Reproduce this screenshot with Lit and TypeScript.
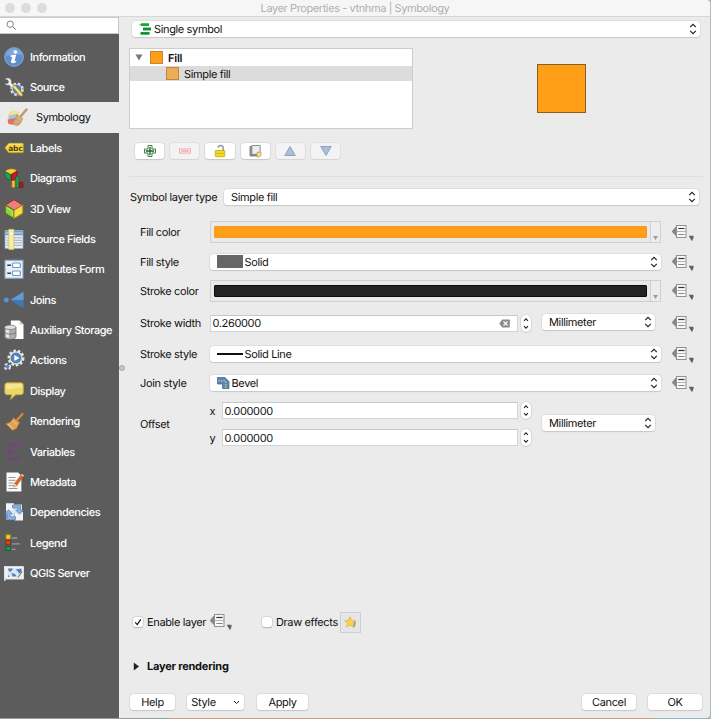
import { LitElement, html, svg, css, nothing } from "lit";
import { customElement, property } from "lit/decorators.js";
import { classMap } from "lit/directives/class-map.js";

const gear = (cx: number, cy: number, r: number, fill: string) => svg`
  <circle cx=${cx} cy=${cy} r=${r} fill="none" stroke=${fill} stroke-width="2.4" stroke-dasharray="2.6 1.9"/>
  <circle cx=${cx} cy=${cy} r=${r - 0.6} fill=${fill}/>`;

const icons: Record<string, unknown> = {
  information: svg`
    <circle cx="10" cy="10" r="9.3" fill="#5b8fd0" stroke="#8db4e4" stroke-width=".9"/>
    <path d="M2 8a8.2 8.2 0 0 1 16 0c-5-2-11 2-16 0z" fill="#7ea9df"/>
    <circle cx="11.4" cy="5" r="1.8" fill="#fff"/>
    <path d="M6.800 8.200l5.400-.5-1.700 6.500 1.800-.4-.4 1.500c-2.300 1.500-5.500 1.300-4.900-1l1.200-4.300-1.700-.1z" fill="#fff"/>`,
  source: svg`
    ${gear(13, 12.3, 5.7, "#deded8")}
    <circle cx="13" cy="12.3" r="4.2" fill="#4d80bb"/>
    <path d="M1 2.2c1.5-1.6 4.2-1.7 5.6.1 1 1.3 1 2.5.6 3.7l4 3.8-2.2 2.3-4-4C3.400 8.500 1.600 7.800.700 6.400l3 .2 1-1.500-.8-2z" fill="#eee" stroke="#777" stroke-width=".4"/>
    <path d="M8.500 10l2.400-2 7.500 8.600.6 3-3-.7z" fill="#efd567" stroke="#6e6121" stroke-width=".6"/>
    <path d="M10 9.200l7.700 9" stroke="#fff0a6" stroke-width=".8"/>`,
  symbology: svg`
    <path d="M2 5.500l4-2.300 7 2-3 6-9-2z" fill="#f4e18a"/>
    <path d="M1.500 8.500l9-1.500 1 5-10 2z" fill="#a3c4e8"/>
    <path d="M.5 12.500l8-1.500 6 3-3 4.500-10-1.500z" fill="#ea6a68"/>
    <path d="M19.500 2.500l-5.300 6.300" stroke="#c09a68" stroke-width="2.500" stroke-linecap="round"/>
    <path d="M9.800 7.600l6 4-2.800 5.400-4 1.800-3.700-3.700c2-.8 3.700-3.500 4.500-7.500z" fill="#d3b183" stroke="#aa8454" stroke-width=".6"/>
    <path d="M7 14l4 3M8.600 11.500l4.300 3" stroke="#a9814e" stroke-width=".6"/>`,
  labels: svg`
    <path d="M.8 10l4-4.700h13.700a.8.8 0 0 1 .8.800v7.800a.8.8 0 0 1-.8.800H4.800z" fill="#f3d63d" stroke="#b99a13" stroke-width=".7"/>
    <path d="M2.300 9.500l3-3.400h13.200" fill="none" stroke="#fff09a" stroke-width=".7"/>
    <text x="4.200" y="12.500" class="abc">abc</text>`,
  diagrams: svg`
    <path d="M7 6.500L1.400 3.600C3 .2 10.500-.3 13 3z" fill="#f5cf29" stroke="#86731c" stroke-width=".5"/>
    <path d="M6.900 6.800v5.800C2 11 .2 7.500 1.300 4z" fill="#23a05a" stroke="#0b5e2d" stroke-width=".6"/>
    <path d="M7.400 6.600l5.600-3.400c1.300 3-.2 7.500-5.600 9.200z" fill="#c21e23" stroke="#750b0e" stroke-width=".6"/>
    <path d="M7.800 12.500h3.400v7H7.800z" fill="#f3c22a" stroke="#80651a" stroke-width=".6"/>
    <path d="M12 8.400h2.800v11.100H12z" fill="#2d9e58" stroke="#155e2c" stroke-width=".6"/>
    <path d="M15.700 14.400h3.200v5h-3.200z" fill="#b9181c" stroke="#690a0d" stroke-width=".6"/>`,
  view3d: svg`
    <path d="M10 .7l8.800 5.400L10 11.300 1.300 6z" fill="#ef7f7c" stroke="#9e2420"/>
    <path d="M1.300 6L10 11.300v8.300L1.300 14.200z" fill="#8ed33c" stroke="#477e18"/>
    <path d="M18.800 6L10 11.300v8.300l8.800-5.400z" fill="#f6dd44" stroke="#a68513"/>
    <path d="M3.200 9l5.200 3.200v4.600" fill="none" stroke="#c4f18b" stroke-width=".8"/>`,
  fields: svg`
    <path d="M1 1.500h18v18H1z" fill="#e9eef4" stroke="#86a9ce" stroke-width=".8"/>
    <path d="M1.300 2h17.400v4.300H1.300z" fill="#6e9cca"/>
    <path d="M2 4h16" stroke="#c7dcf1"/>
    <path d="M2.500 8.800h15.500M2.500 11.300h15.500M2.500 13.800h15.500M2.500 16.300h15.500" stroke="#96a7b9" stroke-width=".9"/>
    <path d="M4.800.4h5v20h-5z" fill="#f7edaa" stroke="#d8c85f" stroke-width=".8"/>
    <circle cx="7.300" cy="4.700" r="1.200" fill="#fff"/>`,
  form: svg`
    <path d="M1 1.300h18v18H1z" fill="#e9eff5" stroke="#80a8d2" stroke-width="1.100"/>
    <rect x="8.500" y="4" width="7.800" height="4.500" rx="1" fill="#fff" stroke="#6d9aca" stroke-width="1.200"/>
    <rect x="8.500" y="12" width="7.800" height="4.500" rx="1" fill="#fff" stroke="#6d9aca" stroke-width="1.200"/>
    <path d="M3.300 6.300h3.600M3.300 14.200h3.600" stroke="#253f60" stroke-width="1.400"/>`,
  joins: svg`
    <circle cx="2.300" cy="10" r="2.500" fill="#5c91cf"/>
    <path d="M6.500 10l13-8.300v16.600z" fill="#3f78b7"/><path d="M6.500 10l13-8.300V10z" fill="#6399d1"/>`,
  storage: svg`
    <path d="M6.800.6h8.700l4 4V19H6.800z" fill="#fff"/><path d="M15.500.6v4h4z" fill="#ccc"/>
    <path d="M.5 7.500v9.200c0 3.500 11.500 3.500 11.500 0V7.500z" fill="#adadad" stroke="#656565" stroke-width=".7"/>
    <path d="M2 9v8c1 .8 2 1 3 1V9.800z" fill="#e5e5e5"/>
    <ellipse cx="6.250" cy="7.300" rx="5.750" ry="2.200" fill="#dedede" stroke="#707070" stroke-width=".7"/>
    <path d="M.5 11.800c0 3 11.500 3 11.500 0" fill="none" stroke="#676767" stroke-width=".8"/>`,
  actions: svg`
    ${gear(12, 8, 7.3, "#e5e5e2")}
    <circle cx="12" cy="8" r="5" fill="#5286c4" stroke="#345b88" stroke-width=".6"/>
    <path d="M10.300 4.900l5.100 3.100-5.100 3.100z" fill="#fff"/>
    ${gear(3.4, 16.7, 2.5, "#e3e3e0")}
    <circle cx="3.400" cy="16.700" r="1.900" fill="#4f89cb"/>`,
  display: svg`
    <path d="M3.300 1.700h13.500a2.500 2.500 0 0 1 2.500 2.500v7a2.500 2.500 0 0 1-2.500 2.500h-5L6.500 18.600l1.300-4.900H3.300a2.500 2.500 0 0 1-2.500-2.500v-7a2.500 2.500 0 0 1 2.500-2.500z" fill="#ecd768" stroke="#c1aa3d" stroke-width=".8"/>
    <path d="M2 8V4.500q0-1.400 1.400-1.400h13.200q1.500 0 1.500 1.400V7c-5-1-10 2-16.100 1z" fill="#f4e68c"/>`,
  rendering: svg`
    <path d="M18.500 3L13 9" stroke="#dc8a32" stroke-width="2.200" stroke-linecap="round"/>
    <path d="M9.500 6.800l6.200 4.700-3.300 6.200-4.300 1.500-6.400-6.400c3.600-.5 6-2.600 7.800-6z" fill="#dda35c" stroke="#b46c22" stroke-width=".7"/>
    <path d="M8.200 9.500l5.400 4.200M3.800 12.800l6.300 5.800" stroke="#fbcf91" stroke-width=".8"/>`,
  variables: svg`
    <path d="M14.800 5.600C13.500 1.300 6 1.200 5.600 5.300c-.3 2.900 2.600 4.300 5.800 4.200-4.600-.2-8 1.700-7.600 4.700.6 4.700 9.500 4.800 11.300-.6" fill="none" stroke="#74437c" stroke-width="1.800"/>
    <circle cx="14" cy="4.700" r="1.500" fill="#7b4783"/>`,
  metadata: svg`
    <path d="M2.500.6h11.700l3.200 3.200v15.800H2.500z" fill="#fafafa"/>
    <path d="M4.500 5.500h7M4.500 8.300h7M4.500 11h5M4.500 13.700h9M4.500 16.500h9" stroke="#999" stroke-width="1"/>
    <path d="M17.300 2.600l2.300 1.500-6.700 9.200-3 1.900.5-3.500z" fill="#df6a27" stroke="#a44310" stroke-width=".5"/>
    <path d="M10.400 11.700l2.500 1.600-3 1.900z" fill="#efd8b5"/><path d="M17.300 2.600l2.300 1.500" stroke="#eee" stroke-width="1.200"/>`,
  dependencies: svg`
    <path d="M2 1.300h8v8H2zM10.700 10h8.300v8.500h-8.300z" fill="#f1f3f6"/><path d="M9 2.500h9v9H9zM2.500 9h8v9h-8z" fill="#dfe5ec"/>
    <path d="M8.500 3h8v5.200h2.800l-3.800 4-3.800-4h2.300V6H8.500z" fill="#8db4e6" stroke="#4c7cba" stroke-width=".7"/>
    <path d="M11.500 17.600H3.400v-5.600H.8l3.800-4.200 3.800 4.200H6v2.800h5.500z" fill="#8db4e6" stroke="#4c7cba" stroke-width=".7"/>`,
  legend: svg`
    <rect x="2" y="1.800" width="4.400" height="4.200" fill="#f4ce22" stroke="#a7830d" stroke-width=".7"/>
    <rect x="2" y="7.600" width="4.400" height="4.200" fill="#d8421c" stroke="#861f0d" stroke-width=".7"/>
    <rect x="2" y="13.400" width="4.400" height="4.200" fill="#1f9a4c" stroke="#0a5927" stroke-width=".7"/>
    <path d="M7.800 5h5.500M7.800 10.800h8M7.800 16.400h3.700" stroke="#999" stroke-width="1.300"/>`,
  server: svg`
    <path d="M1 3.500h18.500v12.500H1z" fill="#f0f3f6" stroke="#ddd"/>
    <path d="M3.500 5.500h14v8.500h-14z" fill="#dbe6f0"/>
    <path d="M4 5.500h5l-1.500 2.500-1.500 1L4.500 7.500zM11.500 6.500l6-1v3.500l-2.500 1.500-1.500-2.500zM7.500 10l3.500 1 1.500 2.500H8.500zM4 11.500l1.500 2.500H4z" fill="#4c82ba"/>
    <path d="M.8 3v15" stroke="#f5f5f5" stroke-width="1.200"/><path d="M14 14.500l4-6" stroke="#555" stroke-width=".9"/>`,
};

const pages: [string, string][] = [
  ["information", "Information"], ["source", "Source"], ["symbology", "Symbology"],
  ["labels", "Labels"], ["diagrams", "Diagrams"], ["view3d", "3D View"],
  ["fields", "Source Fields"], ["form", "Attributes Form"], ["joins", "Joins"],
  ["storage", "Auxiliary Storage"], ["actions", "Actions"], ["display", "Display"],
  ["rendering", "Rendering"], ["variables", "Variables"], ["metadata", "Metadata"],
  ["dependencies", "Dependencies"], ["legend", "Legend"], ["server", "QGIS Server"],
];

const chevrons = html`<svg class="chev" width="8" height="12" viewBox="0 0 8 12">
  <path d="M1.200 4.200L4 1.400l2.800 2.800M1.200 7.800L4 10.600l2.800-2.800" fill="none" stroke="#222" stroke-width="1.150"/></svg>`;

@customElement("combo-box")
export class ComboBox extends LitElement {
  static styles = css`
    :host { display: block; height: 16px; }
    .box { box-sizing: border-box; height: 100%; display: flex; align-items: center; background: #fff;
      border-radius: 3.5px; box-shadow: 0 0 0 .5px #d2d2d2, 0 1px 1px #bfbfbf; padding: 0 3px 0 7px; }
    .text { flex: 1; white-space: nowrap; }
    .chev { display: block; }
  `;
  render() {
    return html`<div class="box"><slot name="icon"></slot><span class="text"><slot></slot></span>${chevrons}</div>`;
  }
}

@customElement("spin-box")
export class SpinBox extends LitElement {
  @property() value = "";
  @property({ type: Boolean }) clearable = false;
  static styles = css`
    :host { display: flex; align-items: center; gap: 3px; height: 17px; }
    .field { flex: 1; box-sizing: border-box; height: 17px; background: #fff; border: 1px solid #d3d3d3;
      border-top-color: #c8c8c8; display: flex; align-items: center; justify-content: space-between; padding: 0 7px 0 2px; }
    .step { box-sizing: border-box; width: 10px; height: 17px; border-radius: 5px; background: #fff;
      box-shadow: 0 0 0 .5px #ccc, 0 .5px 1px #aaa; display: block; }
  `;
  render() {
    return html`<div class="field"><span>${this.value}</span>${this.clearable
        ? html`<svg width="11" height="9" viewBox="0 0 11 9"><path d="M3.200.5H10q.8 0 .8.800v6.400q0 .8-.8.800H3.200L.3 4.500z" fill="#8a8a8a"/><path d="M4.500 2.500l4 4m0-4l-4 4" stroke="#fff" stroke-width="1.100"/></svg>`
        : nothing}</div>
      <svg class="step" viewBox="0 0 10 17"><path d="M3 5.800l2-2 2 2M3 11.200l2 2 2-2" fill="none" stroke="#222" stroke-width="1.100"/></svg>`;
  }
}

@customElement("color-button")
export class ColorButton extends LitElement {
  static styles = css`
    :host { display: flex; box-sizing: border-box; height: 22px; border: 1px solid #d0d0d0; background: #e9e9e9; }
    .well { flex: 1; padding: 4px 3px; }
    .bar { height: 12px; border-radius: 2px; background: var(--swatch); box-shadow: inset 0 0 0 1px var(--edge); }
    .menu { width: 9px; border-left: 1px solid #d0d0d0; display: flex; align-items: flex-end; justify-content: center; background: #ededed; }
    svg { display: block; margin-bottom: 2px; }
  `;
  render() {
    return html`<div class="well"><div class="bar"></div></div>
      <div class="menu"><svg width="5" height="4" viewBox="0 0 5 4"><path d="M0 0h5L2.500 4z" fill="#9a9a9a"/></svg></div>`;
  }
}

@customElement("override-button")
export class OverrideButton extends LitElement {
  static styles = css`:host, svg { display: block; width: 22px; height: 18px; }`;
  render() {
    return html`<svg viewBox="0 0 22 18">
      <path d="M4.500 2.500v9.600L.2 7.500z" fill="#888" stroke="#555" stroke-width=".6"/>
      <rect x="4.500" y="1.500" width="9.500" height="12" fill="#f8f8f8" stroke="#909090"/>
      <path d="M6.300 4.500h6.200" stroke="#333" stroke-width="1.200"/><path d="M6.300 10.500h6.200" stroke="#888" stroke-width="1"/>
      <path d="M5 7.500h9" stroke="#aaa" stroke-width=".9"/>
      <path d="M16.700 11.700h4.800v2l-1.500 3.500-1.700-2.700z" fill="#606060"/></svg>`;
  }
}

@customElement("app-root")
export class AppRoot extends LitElement {
  static styles = css`
    :host { display: block; width: 711px; height: 719px; overflow: hidden; background: #a9bcc0;
      font: 11px/14px Inter, "Liberation Sans", sans-serif; letter-spacing: -.36px; color: #111;
      text-rendering: geometricPrecision; }
    .window { box-sizing: border-box; width: 710px; height: 718px; display: flex; flex-direction: column;
      background: #ebebeb; border-radius: 0 4px 4px 0; overflow: hidden; }
    .desk { height: 1px; background: linear-gradient(90deg, #8fa39c 0 170px, #cf9d78 170px 653px, #93b4c2 653px); }
    .title { flex: none; height: 16px; background: #f6f6f6; border-bottom: 1px solid #d6d6d6; display: flex; align-items: center; }
    .lights { display: flex; gap: 6px; padding-left: 5px; width: 114px; box-sizing: border-box; }
    .light { width: 10px; height: 10px; border-radius: 50%; background: #dcdcdc; }
    .caption { flex: 1; text-align: center; color: #b0b0b0; padding-right: 119px; padding-left: 5px; letter-spacing: -.4px; }
    .body { flex: 1; display: flex; min-height: 0; }
    .sidebar { width: 119px; background: #5c5c5c; flex: none; }
    .search { box-sizing: border-box; height: 17px; background: #fff; border: 1px solid #c8c8c8; border-left: 0; padding: 2px 6px; }
    .search svg { display: block; }
    .pages { padding-top: 7.500px; }
    .page { height: 30.380px; display: flex; align-items: center; gap: 6px; padding-left: 4px; color: #fff;
      font-weight: 500; white-space: nowrap; letter-spacing: -.46px; }
    .page svg { flex: none; overflow: visible; }
    .page.current { background: #ebebeb; color: #111; gap: 9px; padding-left: 7px; font-weight: 400; letter-spacing: -.42px; }
    .abc { font: 700 7.500px "DejaVu Sans", sans-serif; fill: #4d431c; letter-spacing: -.2px; }
    .grip { width: 6px; flex: none; display: flex; align-items: center; justify-content: center; }
    .dot { width: 4px; height: 4px; border-radius: 50%; background: #c4c4c4; border: .5px solid #aaa; }
    .main { flex: 1; display: flex; flex-direction: column; padding: 4px 7px 8px 4px; min-width: 0; }
    .renderer { margin: 0 3px 0 3px; flex: none; }
    .ico { display: block; margin-right: 2px; flex: none; }
    .preview { display: flex; margin-top: 11px; height: 81px; flex: none; }
    .tree { box-sizing: border-box; width: 284px; border: 1px solid #cdcdcd; background: #fff; }
    .node { height: 16px; display: flex; align-items: center; padding-left: 5px; }
    .node.top { font-weight: 600; height: 17px; letter-spacing: -.2px; }
    .node.picked { background: #dcdcdc; padding-left: 36px; height: 15px; }
    .chip { box-sizing: border-box; width: 13px; height: 13px; background: #ff9e17; border: 1px solid #c88432; margin-right: 5px; }
    .top .chip { margin-left: 7px; }
    .picked .chip { background: #e8ae5c; }
    .swatch { box-sizing: border-box; width: 49px; height: 49px; background: #ff9e17; border: 1px solid #8c5d1d; margin: 16px 0 0 124px; }
    .tools { display: flex; gap: 6px; padding-left: 6px; margin-top: 14px; flex: none; }
    .tool, .btn { background: #fff; border-radius: 3.500px; box-shadow: 0 0 0 .5px #cfcfcf, 0 1px 1px #bebebe; height: 16px;
      display: flex; align-items: center; justify-content: center; }
    .tool { width: 29.200px; }
    .tool.off { background: #f3f3f3; box-shadow: 0 0 0 .5px #d6d6d6, 0 1px 1px #d2d2d2; }
    .rule { height: 1px; background: #dfdfdf; margin-top: 17px; flex: none; }
    .row { display: flex; align-items: center; flex: none; height: 22px; padding-left: 11px; }
    .name { width: 69.500px; flex: none; white-space: nowrap; }
    .wide { flex: none; width: 451px; }
    .unit { width: 113px; margin: -2px 0 0 11px; }
    .row override-button { margin: 2px 0 0 11px; }
    .row .far { margin-left: 17px; }
    .single { width: 321.500px; }
    .type { padding: 0 4px 0 1px; margin-top: 9px; }
    .type .name { width: 94px; }
    .type combo-box { flex: 1; }
    .fill-color { margin-top: 13px; }
    .fill-style, .stroke-color { margin-top: 7.500px; }
    .stroke-width { margin-top: 10px; }
    .stroke-style { margin-top: 9px; }
    .join-style { margin-top: 7px; }
    .orange { --swatch: #ff9e17; --edge: #f59a1c; }
    .dark { --swatch: #232323; --edge: #0a0a0a; }
    .patch { width: 26px; height: 13px; background: #666; margin-right: 2px; }
    .line { width: 26px; height: 1.500px; background: #111; margin-right: 2px; }
    .pair { width: 321.500px; display: flex; flex-direction: column; gap: 10px; }
    .axis { display: flex; align-items: center; }
    .axis span { width: 12px; }
    .axis spin-box { flex: 1; }
    .offset { height: 44px; margin-top: 8px; }
    .toggles { display: flex; align-items: center; margin-top: auto; padding-left: 4px; height: 22px; flex: none; white-space: nowrap; }
    .check { width: 10px; height: 10px; border-radius: 2.500px; background: #fff; box-shadow: 0 0 0 .5px #c4c4c4, 0 .5px 1px #aaa; margin-right: 4px; }
    .check svg { display: block; }
    .enable { width: 63px; }
    .draw { width: 62px; }
    .second { margin-left: 30px; }
    .fx { box-sizing: border-box; width: 21px; height: 21px; border: 1px solid #cfcfcf; background: #e6e6e6;
      display: flex; align-items: center; justify-content: center; margin-left: 2px; }
    .group { display: flex; align-items: center; gap: 7px; padding-left: 4px; font-weight: 700; height: 14px; margin-top: 26px; flex: none; letter-spacing: -.22px; }
    .buttons { display: flex; padding: 0 1px; margin-top: 21px; flex: none; }
    .help { width: 45px; } .style { width: 57px; margin: 0 13px 0 12px; gap: 17px; } .apply { width: 51px; }
    .cancel { width: 54px; margin-left: auto; margin-right: 12px; } .ok { width: 54px; }
  `;

  private tool(icon: unknown, off = false) {
    return html`<div class=${classMap({ tool: true, off })}><svg width="14" height="14" viewBox="0 0 14 14">${icon}</svg></div>`;
  }

  render() {
    return html`<div class="window">
      <div class="title">
        <div class="lights"><i class="light"></i><i class="light"></i><i class="light"></i></div>
        <div class="caption">Layer Properties - vtnhma | Symbology</div>
      </div>
      <div class="body">
        <nav class="sidebar">
          <div class="search"><svg width="11" height="11" viewBox="0 0 11 11"><circle cx="4.200" cy="4.200" r="3.200" fill="none" stroke="#777" stroke-width=".9"/><path d="M6.600 6.600l3.300 3.200" stroke="#777"/></svg></div>
          <div class="pages">${pages.map(([id, label]) => html`
            <div class=${classMap({ page: true, current: id === "symbology" })}>
              <svg width="20" height="20" viewBox="0 0 20 20">${icons[id]}</svg><span>${label}</span>
            </div>`)}</div>
        </nav>
        <div class="grip"><i class="dot"></i></div>
        <main class="main">
          <combo-box class="renderer"><svg slot="icon" class="ico" width="13" height="12" viewBox="0 0 13 12">
            <path d="M2 .3h8v2.800H2zM4 4.600h8v2.800H4zM1.500 8.900h9v2.800h-9z" fill="#13a538"/><path d="M2 1.700H.5M2 10.300h8.500M4 6h8" stroke="#0a7024" stroke-width=".7"/></svg>Single symbol</combo-box>
          <section class="preview">
            <div class="tree">
              <div class="node top"><svg width="8" height="7" viewBox="0 0 8 7"><path d="M.5.500h7L4 6.500z" fill="#777"/></svg><i class="chip"></i>Fill</div>
              <div class="node picked"><i class="chip"></i>Simple fill</div>
            </div>
            <div class="swatch"></div>
          </section>
          <div class="tools">
            ${this.tool(svg`<path d="M5 1.500h4V5h3.500v4H9v3.500H5V9H1.500V5H5z" fill="#f3faf3" stroke="#3f8049" stroke-width="1"/><path d="M7 3v8M3 7h8" stroke="#1c5f2b" stroke-width="1.300"/>`)}
            ${this.tool(svg`<path d="M1.500 4.800h11v4.400h-11z" fill="#fbe5e5" stroke="#eda5a5" stroke-width=".8"/><path d="M3.300 7h7.400" stroke="#e99" stroke-width="1.200"/>`, true)}
            ${this.tool(svg`<path d="M5 3.700c.5-3 5-3.200 5.200.3v3" fill="none" stroke="#999" stroke-width="1.500"/><rect x="2.300" y="6.500" width="9.400" height="6.200" rx=".6" fill="#f4d91f" stroke="#b99c0a" stroke-width=".7"/><path d="M3 9.500h8" stroke="#d9bc0c"/>`)}
            ${this.tool(svg`<path d="M2 2.500h8v9.500H2z" fill="#999" stroke="#666" stroke-width=".7"/><path d="M3.800 1.500h8.400v8.900H3.800z" fill="#ececec" stroke="#777" stroke-width=".8"/><path d="M9 8.300h4v3l-1.500 1.700H9z" fill="#f4dda0" stroke="#b79537" stroke-width=".7"/>`)}
            ${this.tool(svg`<path d="M7 2.500l5.300 9H1.700z" fill="#a9bfdd" stroke="#8296b5" stroke-width=".8"/>`, true)}
            ${this.tool(svg`<path d="M7 11.500l5.300-9H1.700z" fill="#a9bfdd" stroke="#8296b5" stroke-width=".8"/>`, true)}
          </div>
          <div class="rule"></div>
          <div class="row type"><span class="name">Symbol layer type</span><combo-box>Simple fill</combo-box></div>
          <div class="row fill-color"><span class="name">Fill color</span><color-button class="wide orange"></color-button><override-button></override-button></div>
          <div class="row fill-style"><span class="name">Fill style</span><combo-box class="wide"><div slot="icon" class="patch"></div>Solid</combo-box><override-button></override-button></div>
          <div class="row stroke-color"><span class="name">Stroke color</span><color-button class="wide dark"></color-button><override-button></override-button></div>
          <div class="row stroke-width"><span class="name">Stroke width</span><spin-box class="single" value="0.260000" clearable></spin-box><combo-box class="unit">Millimeter</combo-box><override-button class="far"></override-button></div>
          <div class="row stroke-style"><span class="name">Stroke style</span><combo-box class="wide"><div slot="icon" class="line"></div>Solid Line</combo-box><override-button></override-button></div>
          <div class="row join-style"><span class="name">Join style</span><combo-box class="wide"><svg slot="icon" class="ico" width="13" height="12" viewBox="0 0 13 12"><path d="M.5.500H8l4 4v7H5.500V7h-5z" fill="#5b87b8" stroke="#3b628f" stroke-width=".7"/><path d="M1.500 3.800H8l.8 1V11" fill="none" stroke="#e8d75e" stroke-dasharray="1.500 1"/></svg>Bevel</combo-box><override-button></override-button></div>
          <div class="row offset"><span class="name">Offset</span>
            <div class="pair"><div class="axis"><span>x</span><spin-box value="0.000000"></spin-box></div>
            <div class="axis"><span>y</span><spin-box value="0.000000"></spin-box></div></div>
            <combo-box class="unit">Millimeter</combo-box></div>
          <div class="toggles">
            <i class="check"><svg width="10" height="10" viewBox="0 0 10 10"><path d="M2.200 5.300l2 2.300L7.800 2.300" fill="none" stroke="#111" stroke-width="1.200"/></svg></i><span class="enable">Enable layer</span>
            <override-button></override-button>
            <i class="check second"></i><span class="draw">Draw effects</span>
            <div class="fx"><svg width="13" height="13" viewBox="0 0 13 13"><path d="M10 5l2 .5-1 5-2 1.500z" fill="#999"/><path d="M6 .8l1.600 3.500 3.800.4-2.800 2.600.8 3.800L6 9.200l-3.400 1.900.8-3.800L.6 4.700l3.800-.4z" fill="#f9d34c" stroke="#e0a83a" stroke-width=".6"/></svg></div>
          </div>
          <div class="group"><svg width="7" height="9" viewBox="0 0 7 9"><path d="M.8.500v8L6 4.500z" fill="#222"/></svg>Layer rendering</div>
          <div class="buttons">
            <div class="btn help">Help</div>
            <div class="btn style">Style<svg width="7" height="5" viewBox="0 0 7 5"><path d="M1 1l2.500 2.500L6 1" fill="none" stroke="#222"/></svg></div>
            <div class="btn apply">Apply</div><div class="btn cancel">Cancel</div><div class="btn ok">OK</div>
          </div>
        </main>
      </div>
    </div><div class="desk"></div>`;
  }
}
